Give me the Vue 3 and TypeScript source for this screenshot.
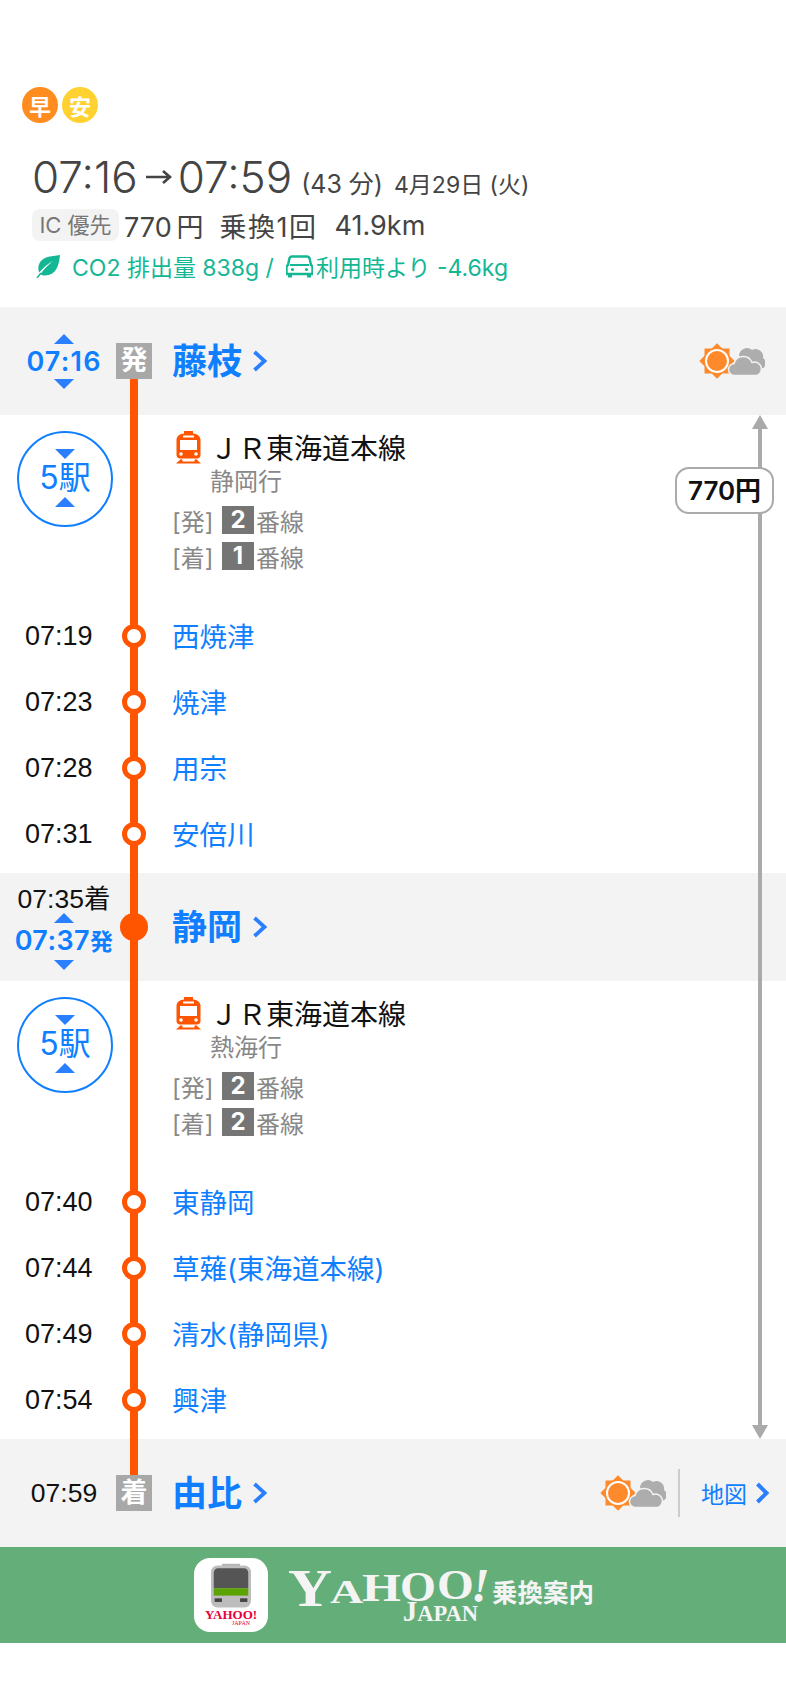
<script setup lang="ts">
type Stop = { time: string; name: string }
type Leg = { count: string; dest: string; dep: string; arr: string; stops: Stop[] }

const legs: Leg[] = [
  {
    count: '5駅',
    dest: '静岡行',
    dep: '2',
    arr: '1',
    stops: [
      { time: '07:19', name: '西焼津' },
      { time: '07:23', name: '焼津' },
      { time: '07:28', name: '用宗' },
      { time: '07:31', name: '安倍川' },
    ],
  },
  {
    count: '5駅',
    dest: '熱海行',
    dep: '2',
    arr: '2',
    stops: [
      { time: '07:40', name: '東静岡' },
      { time: '07:44', name: '草薙(東海道本線)' },
      { time: '07:49', name: '清水(静岡県)' },
      { time: '07:54', name: '興津' },
    ],
  },
]
</script>

<template>
  <main class="page">
    <!-- サマリー -->
    <header class="summary">
      <div class="badges">
        <span class="badge early">早</span>
        <span class="badge cheap">安</span>
      </div>
      <div class="hero">
        <span class="hero-time">07:16</span>
        <svg class="hero-arrow" width="27" height="16" viewBox="0 0 27 16">
          <path d="M1 8h24M18 2l7 6-7 6" fill="none" stroke="#444" stroke-width="2.6" />
        </svg>
        <span class="hero-time">07:59</span>
        <span class="hero-dur">(43 分)</span>
        <span class="hero-date">4月29日 (火)</span>
      </div>
      <div class="facts">
        <span class="ic">IC 優先</span>
        <span class="fare-text">770&#8201;円</span>
        <span class="transfer">乗換1回</span>
        <span class="dist">41.9km</span>
      </div>
      <div class="co2">
        <svg class="leaf" width="25" height="24" viewBox="0 0 25 24">
          <path d="M24 1C23 12 20 21 9 21.500C7 21.500 5.500 21 4.500 20C9 14 13 10 17 7C12 9.500 7 14 3.200 18.500C1 13 3 6 10 3.500C15 1.800 20 2 24 1Z" fill="#14b794" />
          <path d="M1 24L5 19" stroke="#14b794" stroke-width="1.500" />
        </svg>
        <span>CO2 排出量 838g /</span>
        <svg class="car" width="27" height="24" viewBox="0 0 27 24">
          <path d="M6 2.500h15c1.500 0 2.200.8 2.600 2L25 11c1 .6 1.500 1.500 1.500 2.500V20h-26v-6.500c0-1 .5-1.900 1.500-2.500l1.400-6.500c.4-1.200 1.100-2 2.600-2Z" fill="none" stroke="#14b794" stroke-width="2.400" />
          <path d="M4 11h19" stroke="#14b794" stroke-width="2" />
          <path d="M2 20h4v3.500H2zM21 20h4v3.500h-4z" fill="#14b794" />
          <circle cx="6.500" cy="15.500" r="1.600" fill="#14b794" />
          <circle cx="20.500" cy="15.500" r="1.600" fill="#14b794" />
        </svg>
        <span>利用時より -4.6kg</span>
      </div>
    </header>

    <section class="route">
      <div class="track"></div>
      <div class="fare-span">
        <i class="head up"></i>
        <i class="shaft"></i>
        <i class="head down"></i>
        <span class="fare-pill">770円</span>
      </div>

      <!-- 出発 -->
      <div class="station">
        <div class="st-time">
          <i class="tri up"></i>
          <span class="dep-time">07:16</span>
          <i class="tri down"></i>
        </div>
        <div class="st-rail"><span class="mark">発</span></div>
        <div class="st-name">藤枝<svg class="chev" width="15" height="22" viewBox="0 0 15 22"><path d="M2.500 2l10 9-10 9" fill="none" stroke="#2a7fff" stroke-width="3.800" /></svg></div>
        <div class="weather first">
          <svg width="66" height="36" viewBox="0 0 66 36">
            <g fill="#ff8a2c">
              <rect x="5.500" y="5.500" width="25" height="25" />
              <rect x="5.500" y="5.500" width="25" height="25" transform="rotate(45 18 18)" />
            </g>
            <circle cx="18" cy="18" r="11" fill="#ff8a2c" stroke="#fff" stroke-width="2" />
            <path d="M40 12A8 8 0 0 1 53 7A7.500 7.500 0 0 1 64 15A6 6 0 0 1 61 26H45Z" fill="#adadad" />
            <path d="M36 32.500A6 6 0 0 1 35 20.500A9.500 9.500 0 0 1 53 19.500A6.500 6.500 0 0 1 58 32.500Z" fill="#adadad" stroke="#f3f3f3" stroke-width="1.500" />
          </svg>
        </div>
      </div>

      <template v-for="(leg, i) in legs" :key="i">
        <div class="leg">
          <div class="leg-info">
            <div class="count">
              <i class="tri down"></i>
              <span>{{ leg.count }}</span>
              <i class="tri up"></i>
            </div>
            <div class="line">
              <div class="line-name">
                <svg class="train" width="27" height="33" viewBox="0 0 27 33">
                  <path d="M9 0h9v2.500c4 .5 7 2 7.500 6V24c0 2-1.500 3.500-3.500 3.500H5C3 27.500 1.500 26 1.500 24V8.500c.5-4 3.500-5.500 7.500-6Z" fill="#ff5500" />
                  <rect x="5" y="9" width="17" height="10" fill="#fff" />
                  <rect x="8" y="4.500" width="11" height="2" fill="#fff" />
                  <circle cx="6" cy="23" r="1.800" fill="#fff" />
                  <circle cx="21" cy="23" r="1.800" fill="#fff" />
                  <path d="M6 28l-5 4.500h25L21 28l-1.500 1v1.500h-12V29Z" fill="#ff5500" />
                </svg>
                <span class="line-label">ＪＲ東海道本線</span>
              </div>
              <div class="dest">{{ leg.dest }}</div>
              <div class="plat"><span class="plat-k">[発]</span><b>{{ leg.dep }}</b><span>番線</span></div>
              <div class="plat"><span class="plat-k">[着]</span><b>{{ leg.arr }}</b><span>番線</span></div>
            </div>
          </div>
          <div v-for="stop in leg.stops" :key="stop.time" class="stop">
            <span class="stop-time">{{ stop.time }}</span>
            <span class="dot-cell"><i class="dot"></i></span>
            <span class="stop-name">{{ stop.name }}</span>
          </div>
        </div>

        <!-- 乗換駅 -->
        <div v-if="i === 0" class="station">
          <div class="st-time">
            <span class="arr-time">07:35着</span>
            <i class="tri up"></i>
            <span class="dep-time strong">07:37<small>発</small></span>
            <i class="tri down"></i>
          </div>
          <div class="st-rail"><i class="dot-big"></i></div>
          <div class="st-name">静岡<svg class="chev" width="15" height="22" viewBox="0 0 15 22"><path d="M2.500 2l10 9-10 9" fill="none" stroke="#2a7fff" stroke-width="3.800" /></svg></div>
        </div>
      </template>

      <!-- 到着 -->
      <div class="station end">
        <div class="st-time"><span class="arr-time">07:59</span></div>
        <div class="st-rail"><span class="mark">着</span></div>
        <div class="st-name">由比<svg class="chev" width="15" height="22" viewBox="0 0 15 22"><path d="M2.500 2l10 9-10 9" fill="none" stroke="#2a7fff" stroke-width="3.800" /></svg></div>
        <div class="weather">
          <svg width="66" height="36" viewBox="0 0 66 36">
            <g fill="#ff8a2c">
              <rect x="5.500" y="5.500" width="25" height="25" />
              <rect x="5.500" y="5.500" width="25" height="25" transform="rotate(45 18 18)" />
            </g>
            <circle cx="18" cy="18" r="11" fill="#ff8a2c" stroke="#fff" stroke-width="2" />
            <path d="M40 12A8 8 0 0 1 53 7A7.500 7.500 0 0 1 64 15A6 6 0 0 1 61 26H45Z" fill="#adadad" />
            <path d="M36 32.500A6 6 0 0 1 35 20.500A9.500 9.500 0 0 1 53 19.500A6.500 6.500 0 0 1 58 32.500Z" fill="#adadad" stroke="#f3f3f3" stroke-width="1.500" />
          </svg>
        </div>
        <div class="map-link">地図<svg width="15" height="22" viewBox="0 0 15 22"><path d="M2.500 2l9 9-9 9" fill="none" stroke="#2a7fff" stroke-width="4" /></svg></div>
      </div>
    </section>

    <!-- アプリ誘導 -->
    <footer class="promo">
      <div class="app-icon">
        <svg width="40" height="47" viewBox="0 0 44 50">
          <rect x="12" y="0" width="20" height="4" rx="1" fill="#b5b5b5" />
          <rect x="0" y="2" width="44" height="46" rx="7" fill="#bdbdbd" />
          <path d="M3 27V10c0-3 2-5 5-5h28c3 0 5 2 5 5v17Z" fill="#555" />
          <rect x="3" y="27" width="38" height="8" fill="#5ba300" />
          <rect x="4" y="38" width="8" height="4" fill="#444" />
          <rect x="32" y="38" width="8" height="4" fill="#444" />
        </svg>
        <div class="mini-logo">YAHOO!</div>
        <div class="mini-japan">JAPAN</div>
      </div>
      <div class="logo">
        <div class="logo-main">
          <span class="l y">Y</span>
          <span class="l a">A</span>
          <span class="l h">H</span>
          <span class="l o1">O</span>
          <span class="l o2">O</span>
          <span class="l ex">!</span>
        </div>
        <div class="logo-sub"><span>J</span>APAN</div>
      </div>
      <div class="promo-title">乗換案内</div>
    </footer>
  </main>
</template>

<style>
html, body {
  margin: 0;
  background: #fff;
}
</style>

<style scoped>
.page {
  width: 786px;
  height: 1704px;
  overflow: hidden;
  background: #fff;
  font-family: Inter, "Noto Sans CJK JP", "Noto Sans", sans-serif;
  color: #111;
}

/* サマリー */
.summary {
  height: 307px;
  box-sizing: border-box;
  padding: 87px 0 0 22px;
}
.badges {
  display: flex;
  gap: 4px;
}
.badge {
  width: 36px;
  height: 36px;
  border-radius: 50%;
  display: flex;
  align-items: center;
  justify-content: center;
  color: #fff;
  font-size: 22px;
  font-weight: 700;
}
.early { background: #ff8c1e; }
.cheap { background: #ffd232; }

.hero {
  display: flex;
  align-items: baseline;
  height: 60px;
  margin: 24px 0 0 10px;
  color: #444;
}
.hero-time {
  font-size: 44px;
  font-weight: 300;
  line-height: 60px;
}
.hero-arrow {
  align-self: center;
  margin: 0 6px 0 7px;
}
.hero-dur {
  font-size: 25px;
  margin-left: 9px;
  white-space: nowrap;
}
.hero-date {
  font-size: 23px;
  margin-left: 11px;
  white-space: nowrap;
}
.facts {
  display: flex;
  align-items: center;
  height: 32px;
  margin: 2px 0 0 10px;
  font-size: 27px;
  color: #444;
}
.ic {
  box-sizing: border-box;
  width: 87px;
  height: 32px;
  background: #f3f3f3;
  border-radius: 8px;
  color: #777;
  font-size: 22px;
  text-align: center;
  line-height: 32px;
  white-space: nowrap;
}
.fare-text { margin-left: 5px; white-space: nowrap; }
.transfer { margin-left: 16px; letter-spacing: 1.500px; }
.dist { margin-left: 17px; }
.co2 {
  display: flex;
  align-items: center;
  height: 28px;
  margin: 11px 0 0 14px;
  color: #14b794;
  font-size: 23px;
}
.leaf { margin-right: 11px; }
.car { margin: 0 3px 0 12px; }

/* 経路 */
.route {
  position: relative;
  height: 1240px;
}
.track {
  position: absolute;
  left: 130px;
  top: 72px;
  bottom: 72px;
  width: 8px;
  background: #ff5500;
}
.fare-span {
  position: absolute;
  left: 752px;
  top: 108px;
  width: 16px;
  height: 1024px;
  display: flex;
  flex-direction: column;
  align-items: center;
  z-index: 1;
}
.shaft {
  flex: 1;
  width: 4px;
  background: #aaa;
}
.head {
  width: 0;
  height: 0;
  border-left: 8px solid transparent;
  border-right: 8px solid transparent;
}
.head.up { border-bottom: 14px solid #aaa; }
.head.down { border-top: 14px solid #aaa; }
.fare-pill {
  position: absolute;
  left: -77px;
  top: 52px;
  width: 99px;
  height: 47px;
  box-sizing: border-box;
  border: 2px solid #aaa;
  border-radius: 14px;
  background: #fff;
  color: #111;
  font-size: 26px;
  font-weight: 600;
  line-height: 44px;
  text-align: center;
}

.station {
  display: flex;
  align-items: center;
  height: 108px;
  background: #f3f3f3;
}
.st-time {
  width: 112px;
  margin-left: 8px;
  display: flex;
  flex-direction: column;
  align-items: center;
}
.dep-time {
  color: #0f7fff;
  font-size: 27px;
  font-weight: 600;
  line-height: 35px;
  letter-spacing: 1.200px;
}
.dep-time.strong {
  line-height: 36px;
  letter-spacing: 0.400px;
  white-space: nowrap;
}
.dep-time small {
  font-size: 23px;
}
.arr-time {
  font-family: "Liberation Sans", "Noto Sans CJK JP", sans-serif;
  font-size: 26.500px;
  line-height: 28px;
  white-space: nowrap;
}
.tri {
  display: block;
  width: 0;
  height: 0;
  border-left: 10px solid transparent;
  border-right: 10px solid transparent;
}
.tri.up { border-bottom: 10px solid #2a7fff; }
.tri.down { border-top: 10px solid #2a7fff; }
.st-rail {
  width: 28px;
  flex: none;
  display: flex;
  justify-content: center;
}
.mark {
  position: relative;
  flex: none;
  width: 36px;
  height: 36px;
  background: #a8a8a8;
  color: #fff;
  font-size: 27px;
  font-weight: 700;
  line-height: 36px;
  text-align: center;
}
.dot-big {
  position: relative;
  width: 28px;
  height: 28px;
  border-radius: 50%;
  background: #ff5500;
}
.st-name {
  margin-left: 24px;
  display: flex;
  align-items: center;
  color: #0f7fff;
  font-size: 35px;
  font-weight: 700;
  line-height: 40px;
}
.chev {
  margin-left: 10px;
}
.weather {
  margin-left: auto;
  margin-right: 21px;
  height: 36px;
  position: relative;
}
.end .weather {
  margin-right: 12px;
  margin-left: 333px;
}
.map-link {
  box-sizing: border-box;
  height: 48px;
  border-left: 2px solid #ccc;
  margin-right: 16px;
  padding-left: 21px;
  display: flex;
  align-items: center;
  gap: 8px;
  color: #0f7fff;
  font-size: 23px;
  white-space: nowrap;
}

/* 区間 */
.leg {
  height: 458px;
}
.leg-info {
  height: 188px;
  display: flex;
}
.count {
  box-sizing: border-box;
  width: 96px;
  height: 96px;
  margin: 16px 0 0 17px;
  padding-top: 16px;
  border: 2px solid #0f7fff;
  border-radius: 50%;
  display: flex;
  flex-direction: column;
  align-items: center;
  color: #0f7fff;
  font-size: 32px;
  line-height: 38px;
}
.line {
  margin: 16px 0 0 59px;
}
.line-name {
  display: flex;
  align-items: center;
  height: 33px;
  font-size: 28px;
  color: #111;
}
.line-label {
  padding-bottom: 2px;
}
.train { margin: 0 8px 0 3px; }
.dest {
  margin: 2px 0 0 38px;
  color: #888;
  font-size: 24px;
  line-height: 32px;
}
.plat {
  display: flex;
  align-items: center;
  height: 28px;
  margin-top: 8px;
  color: #888;
  font-size: 24px;
}
.dest + .plat {
  margin-top: 8px;
}
.plat-k {
  width: 50px;
}
.plat b {
  width: 32px;
  height: 28px;
  margin-right: 2px;
  background: #757575;
  color: #fff;
  font-size: 24px;
  font-weight: 700;
  line-height: 28px;
  text-align: center;
}
.stop {
  display: flex;
  align-items: center;
  height: 66px;
}
.stop-time {
  width: 97px;
  margin-left: 25px;
  font-family: "Liberation Sans", sans-serif;
  font-size: 27px;
  color: #111;
}
.dot-cell {
  width: 24px;
  display: flex;
  justify-content: center;
}
.dot {
  position: relative;
  box-sizing: border-box;
  width: 24px;
  height: 24px;
  border: 5px solid #ff5500;
  border-radius: 50%;
  background: #fff;
}
.stop-name {
  margin-left: 26px;
  padding-bottom: 3px;
  color: #0f7fff;
  font-size: 27.500px;
}

/* アプリ誘導 */
.promo {
  height: 96px;
  background: #64ae79;
  display: flex;
  align-items: center;
  box-sizing: border-box;
  padding-left: 194px;
}
.app-icon {
  width: 74px;
  height: 74px;
  border-radius: 16px;
  background: #fff;
  display: flex;
  flex-direction: column;
  align-items: center;
  box-sizing: border-box;
  padding-top: 5px;
}
.mini-logo {
  font-family: "Liberation Serif", serif;
  font-size: 13px;
  font-weight: 700;
  line-height: 10px;
  color: #e8003a;
}
.mini-japan {
  font-family: "Liberation Serif", serif;
  font-size: 6px;
  line-height: 6px;
  color: #e8003a;
  margin-left: 20px;
}
.logo {
  margin-left: 20px;
  width: 196px;
  height: 52px;
  color: #f4f4f4;
  font-family: "Liberation Serif", serif;
  display: flex;
  flex-direction: column;
  align-items: flex-end;
}
.logo-main {
  display: flex;
  align-items: flex-start;
  width: 196px;
  height: 33px;
  flex: none;
  font-weight: 700;
}
/* ロゴの文字は横に伸ばして並べる */
.l {
  display: block;
  flex: none;
  line-height: 1;
  transform-origin: left top;
  white-space: nowrap;
}
.l.y  { width: 42px; font-size: 53px; margin-top: -7px; transform: scaleX(1.15); }
.l.a  { width: 32px; font-size: 33px; margin-top: 7px; transform: scaleX(1.4); }
.l.h  { width: 38px; font-size: 41px; margin-top: -2px; transform: scaleX(1.22); }
.l.o1 { width: 37px; font-size: 42px; margin-top: -3px; transform: scaleX(1.1); }
.l.o2 { width: 34px; font-size: 43px; margin-top: -6px; transform: scaleX(1.1); }
.l.ex { width: 13px; font-size: 48px; font-style: italic; margin-top: -7px; }
.logo-sub {
  flex: none;
  font-size: 22.500px;
  font-weight: 700;
  line-height: 19px;
  margin-right: 6px;
}
.logo-sub span {
  font-size: 29px;
}
.promo-title {
  margin-left: 8px;
  margin-top: -10px;
  color: #f4f4f4;
  font-size: 25.500px;
  font-weight: 700;
  white-space: nowrap;
}
</style>
